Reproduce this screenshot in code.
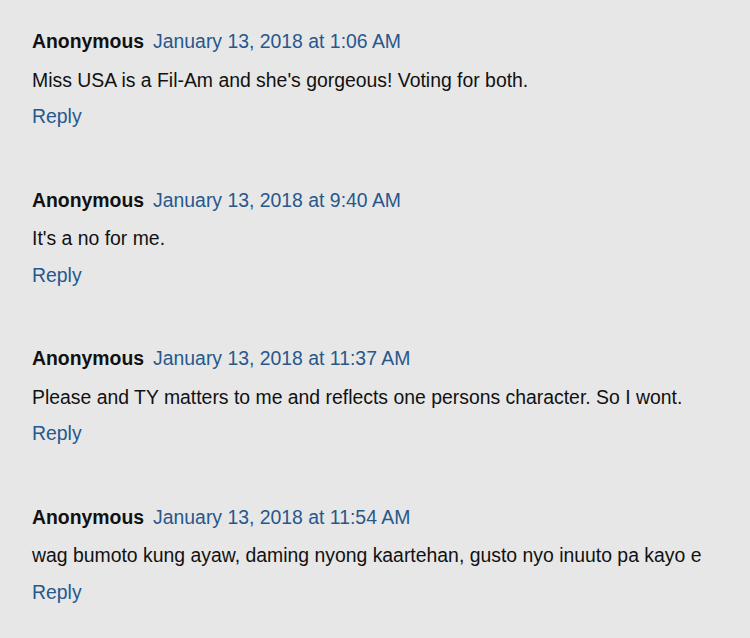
import React from 'react';

type Comment = {
  author: string;
  date: string;
  body: string;
};

const comments: Comment[] = [
  {
    author: 'Anonymous',
    date: 'January 13, 2018 at 1:06 AM',
    body: "Miss USA is a Fil-Am and she's gorgeous! Voting for both.",
  },
  {
    author: 'Anonymous',
    date: 'January 13, 2018 at 9:40 AM',
    body: "It's a no for me.",
  },
  {
    author: 'Anonymous',
    date: 'January 13, 2018 at 11:37 AM',
    body: 'Please and TY matters to me and reflects one persons character. So I wont.',
  },
  {
    author: 'Anonymous',
    date: 'January 13, 2018 at 11:54 AM',
    body: 'wag bumoto kung ayaw, daming nyong kaartehan, gusto nyo inuuto pa kayo e',
  },
];

const App: React.FC = () => {
  return (
    <div className="min-h-[638px] w-[750px] bg-[#e7e7e7] pt-[23px] font-['Liberation_Sans',Arial,sans-serif] text-[19.4px] text-[#111]">
      {comments.map((c, i) => (
        <div key={i} className="px-[32px] pb-[46px]">
          <div className="leading-[37.5px]">
            <span className="font-bold">{c.author}</span>
            <span className="ml-[9px] text-[#27588c]">{c.date}</span>
          </div>
          <p className="leading-[37.5px] pt-[1px]">{c.body}</p>
          <a href="#" className="-mt-[1px] block leading-[37.5px] text-[#24588f]">
            Reply
          </a>
        </div>
      ))}
    </div>
  );
};

export default App;
